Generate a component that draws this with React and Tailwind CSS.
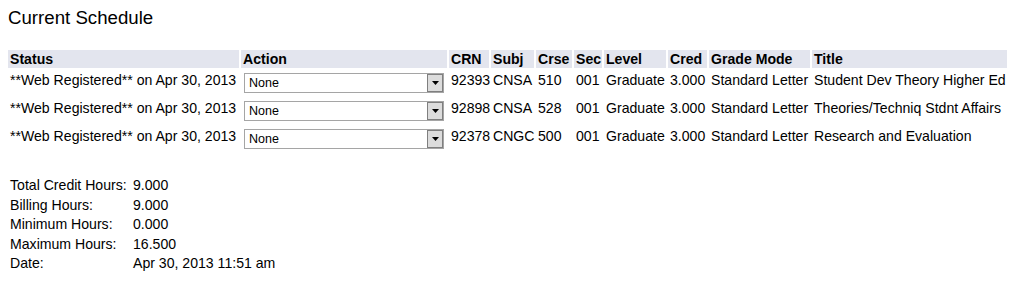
import React from "react";

const widths = [231, 206, 40, 43, 36, 28, 62, 39, 101, 195];
const headers = ["Status", "Action", "CRN", "Subj", "Crse", "Sec", "Level", "Cred", "Grade Mode", "Title"];
const rows = [
  ["92393", "CNSA", "510", "001", "Graduate", "3.000", "Standard Letter", "Student Dev Theory Higher Ed"],
  ["92898", "CNSA", "528", "001", "Graduate", "3.000", "Standard Letter", "Theories/Techniq Stdnt Affairs"],
  ["92378", "CNGC", "500", "001", "Graduate", "3.000", "Standard Letter", "Research and Evaluation"],
];
const summary = [
  ["Total Credit Hours:", "9.000"],
  ["Billing Hours:", "9.000"],
  ["Minimum Hours:", "0.000"],
  ["Maximum Hours:", "16.500"],
  ["Date:", "Apr 30, 2013 11:51 am"],
];

function FakeSelect() {
  return (
    <div className="flex w-[200px] h-[20px] border border-[#a5a5a5] bg-white">
      <div className="flex-1 pl-[4px] text-[12.5px] leading-[18px] text-black">None</div>
      <div className="w-[16px] h-full border border-[#7f7f7f] bg-[#dcdcdc] flex items-center justify-center">
        <svg width="7" height="4" viewBox="0 0 7 4">
          <path d="M0 0 H7 L3.5 4 Z" fill="#000" />
        </svg>
      </div>
    </div>
  );
}

export default function App() {
  return (
    <div
      className="bg-white text-black w-[1017px] h-[284px] pt-[7px] px-[8px]"
      style={{ fontFamily: '"Liberation Sans", Arial, sans-serif' }}
    >
      <div className="text-[18.67px] leading-[22px]">Current Schedule</div>

      <div className="mt-[21px] flex flex-col gap-[2px] text-[14.1px]">
        <div className="flex gap-[2px]">
          {headers.map((h, i) => (
            <div
              key={h}
              className="bg-[#e3e5ee] h-[18px] px-[2px] pt-[1px] font-bold leading-[16px] whitespace-nowrap"
              style={{ width: widths[i] }}
            >
              {h}
            </div>
          ))}
        </div>
        {rows.map((r) => (
          <div key={r[0]} className="flex gap-[2px] h-[26px]">
            <div className="px-[2px] pt-[2px] leading-[16px] whitespace-nowrap" style={{ width: widths[0] }}>
              **Web Registered** on Apr 30, 2013
            </div>
            <div className="pl-[3px] pt-[3px]" style={{ width: widths[1] }}>
              <FakeSelect />
            </div>
            {r.map((c, j) => (
              <div
                key={j}
                className="px-[2px] pt-[2px] leading-[16px] whitespace-nowrap"
                style={{ width: widths[j + 2] }}
              >
                {c}
              </div>
            ))}
          </div>
        ))}
      </div>

      <div className="mt-[24px] flex flex-col text-[14.1px] leading-[19.5px]">
        {summary.map(([l, v]) => (
          <div key={l} className="flex">
            <div className="w-[123px] pl-[2px] whitespace-nowrap">{l}</div>
            <div className="px-[2px] whitespace-nowrap">{v}</div>
          </div>
        ))}
      </div>
    </div>
  );
}
